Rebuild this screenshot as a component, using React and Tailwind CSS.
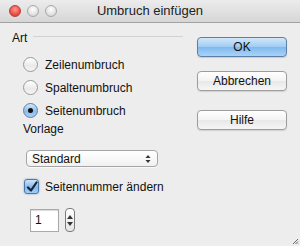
import { useState } from "react";

function Light({ red }) {
  return (
    <div
      className={
        red
          ? "w-[12px] h-[12px] rounded-full border border-[#b3403a] bg-[radial-gradient(circle_at_50%_35%,#ff9c92_0%,#f0534a_55%,#c9332b_100%)]"
          : "w-[12px] h-[12px] rounded-full border border-[#a8a8a8] bg-[radial-gradient(circle_at_50%_35%,#ffffff_0%,#e2e2e2_60%,#c6c6c6_100%)]"
      }
    />
  );
}

function Radio({ checked, label, onClick }) {
  return (
    <div className="flex items-center h-[23px] ml-[11px] cursor-default" onClick={onClick}>
      {checked ? (
        <div className="w-[15px] h-[15px] rounded-full border border-[#5a7fa8] bg-[linear-gradient(#d5e8fb,#8dbcea_55%,#a9d0f5)] flex items-center justify-center">
          <div className="w-[5px] h-[5px] rounded-full bg-[#111]" />
        </div>
      ) : (
        <div className="w-[15px] h-[15px] rounded-full border border-[#9a9a9a] bg-[linear-gradient(#ffffff,#e9e9e9_60%,#f7f7f7)]" />
      )}
      <span className="ml-[7px] text-[12px] text-[#111]">{label}</span>
    </div>
  );
}

function Button({ primary, children }) {
  return (
    <div
      className={
        primary
          ? "w-[90px] h-[20px] rounded-[4px] border border-[#5b7fa6] bg-[linear-gradient(#d3e7fa,#9ecbf3_50%,#7fb8ee_51%,#a9d3f7)] flex items-center justify-center text-[12px] text-[#111] shadow-[0_1px_1px_rgba(0,0,0,0.15)]"
          : "w-[90px] h-[20px] rounded-[4px] border border-[#9d9d9d] bg-[linear-gradient(#ffffff,#f3f3f3_50%,#e8e8e8_51%,#f6f6f6)] flex items-center justify-center text-[12px] text-[#111] shadow-[0_1px_1px_rgba(0,0,0,0.12)]"
      }
    >
      {children}
    </div>
  );
}

export default function App() {
  const [art, setArt] = useState("seite");
  const [changeNum, setChangeNum] = useState(true);

  return (
    <div className="w-[300px] h-[246px] bg-[#ededed] relative overflow-hidden font-['Liberation_Sans',Arial,sans-serif]">
      <div className="h-[23px] flex items-center border-b border-[#a2a2a2] bg-[linear-gradient(#ececec,#d6d6d6)]">
        <div className="w-[57px] flex items-center gap-[6px] pl-[9px]">
          <Light red />
          <Light />
          <Light />
        </div>
        <div className="flex-1 text-center text-[13px] text-[#222] pr-[57px]">
          Umbruch einfügen
        </div>
      </div>

      <div className="flex">
        <div className="w-[183px] pl-[12px] flex flex-col">
          <div className="flex items-center h-[14px] mt-[8px]">
            <span className="text-[12px] text-[#111]">Art</span>
            <div className="flex-1 ml-[6px] -mt-[3px] border-t border-[#d2d2d2]" />
          </div>
          <div className="mt-[8px] flex flex-col">
            <Radio label="Zeilenumbruch" checked={art === "zeile"} onClick={() => setArt("zeile")} />
            <Radio label="Spaltenumbruch" checked={art === "spalte"} onClick={() => setArt("spalte")} />
            <Radio label="Seitenumbruch" checked={art === "seite"} onClick={() => setArt("seite")} />
          </div>
          <div className="h-[14px] ml-[11px] flex items-center text-[12px] text-[#111]">Vorlage</div>

          <div className="mt-[14px] ml-[14px] w-[132px] h-[17px] rounded-[4px] border border-[#a5a5a5] bg-[linear-gradient(#ffffff,#f1f1f1)] flex items-center pl-[5px] pr-[6px] shadow-[0_1px_0_rgba(255,255,255,0.6)]">
            <span className="flex-1 text-[12px] text-[#111]">Standard</span>
            <svg width="6" height="10" viewBox="0 0 6 10">
              <path d="M0.5 4 L3 1 L5.5 4 Z" fill="#333" />
              <path d="M0.5 6 L3 9 L5.5 6 Z" fill="#333" />
            </svg>
          </div>

          <div className="mt-[12px] ml-[12px] h-[15px] flex items-center cursor-default" onClick={() => setChangeNum(!changeNum)}>
            <div className="w-[15px] h-[15px] rounded-[3px] border border-[#4d77a8] bg-[linear-gradient(#cfe4fa,#85b8ea_55%,#a4cdf5)] shadow-[0_0_2px_#6c9ed6] flex items-center justify-center">
              {changeNum && (
                <svg width="12" height="12" viewBox="0 0 12 12">
                  <path d="M2 6.5 L5 9.5 L10.5 1.5" fill="none" stroke="#14233a" strokeWidth="2.2" strokeLinecap="round" strokeLinejoin="round" />
                </svg>
              )}
            </div>
            <span className="ml-[6px] text-[12px] text-[#111]">Seitennummer ändern</span>
          </div>

          <div className="mt-[14px] ml-[18px] flex items-center">
            <div className="w-[29px] h-[23px] border border-[#a9a9a9] bg-white shadow-[inset_0_1px_1px_rgba(0,0,0,0.15)] flex items-center pl-[4px] text-[12px] text-[#111]">
              1
            </div>
            <div className="ml-[6px] w-[10px] h-[24px] rounded-[4px] border border-[#7b7b7b] bg-[linear-gradient(#ffffff,#e6e6e6)] flex flex-col items-center justify-center gap-[3px]">
              <svg width="6" height="4" viewBox="0 0 6 4">
                <path d="M0 4 L3 0 L6 4 Z" fill="#333" />
              </svg>
              <svg width="6" height="4" viewBox="0 0 6 4">
                <path d="M0 0 L3 4 L6 0 Z" fill="#333" />
              </svg>
            </div>
          </div>
        </div>

        <div className="ml-[14px] flex flex-col pt-[14px]">
          <Button primary>OK</Button>
          <div className="mt-[14px]">
            <Button>Abbrechen</Button>
          </div>
          <div className="mt-[19px]">
            <Button>Hilfe</Button>
          </div>
        </div>
      </div>

      <svg className="absolute right-[1px] bottom-[1px]" width="8" height="8" viewBox="0 0 8 8">
        <path d="M7 2 L2 7 M7 4.5 L4.5 7 M7 6.5 L6.5 7" stroke="#6a6a6a" strokeWidth="1" />
      </svg>
    </div>
  );
}
